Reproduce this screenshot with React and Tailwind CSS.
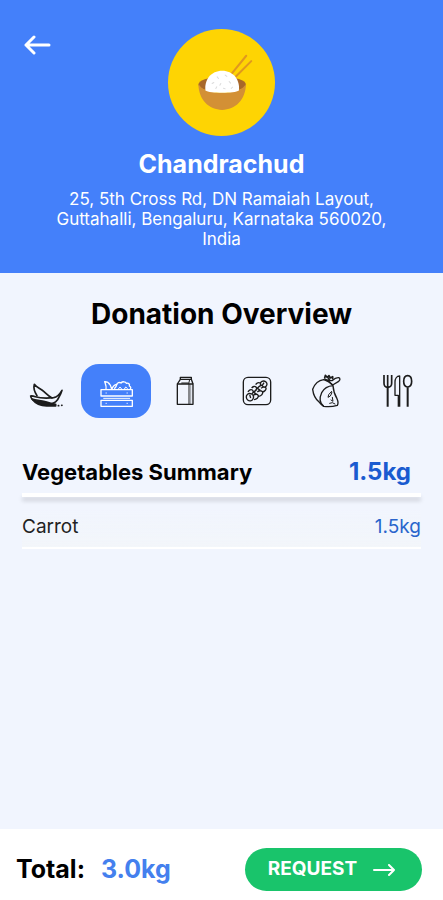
import React, { useState } from 'react';

const BananaIcon = () => (
    <svg viewBox="0 0 108 108" className="w-9 h-9" fill="none" stroke="currentColor" strokeWidth="5" strokeLinejoin="round" strokeLinecap="round" aria-hidden="true">
        <path d="M19 34c-3 10 0 22 8 34M19 34c8 11 18 12 28 21 9 8 14 14 25 20" />
        <path d="M8 69c4-1 8 0 14 2 16 5 36 5 55 3 11-2 18-10 25-22-3 12-9 20-14 29-7 9-17 13-31 12C34 91 10 85 8 69z" />
        <path d="M12 78c14 5 30 4 44 9 8 3 16 6 27 7v5H56c-18 0-34-8-44-21z" fill="currentColor" />
        <path d="M91 98h1M101 97h1" />
    </svg>
);

const CrateIcon = () => (
    <svg viewBox="0 0 108 108" className="w-9 h-9" fill="none" stroke="currentColor" strokeWidth="4" strokeLinejoin="round" strokeLinecap="round" aria-hidden="true">
        <path d="M9 50h94v19H9zM9 82h94v18H9z" />
        <path d="M17 76h78" strokeWidth="3" />
        <path d="M24 60h1M87 60h1M24 91h1M87 91h1" strokeWidth="3" />
        <path d="M24 48c2-8-2-15-4-22 11-1 18 9 21 22M24 27c3-1 7 2 10 6M42 47c3-8 8-12 14-13" />
        <path d="M50 46c3-3 5-5 6-11 2-6 8-8 13-5 4-5 14-5 16 1 7-2 11 3 9 8 5 2 5 6 3 9" />
        <path d="M62 47l4-5 4 5M80 47l3-5 5 4" strokeWidth="3" />
    </svg>
);

const MilkIcon = () => (
    <svg viewBox="0 0 108 108" className="w-9 h-9" fill="none" stroke="currentColor" strokeWidth="4" strokeLinejoin="round" aria-hidden="true">
        <path d="M37 13h33v6H37zM37 19l-9 14M70 19l5 14" />
        <path d="M28 33h47v61H28z" />
        <path d="M63 33v61M65 19l-3 14M40 30h22" strokeWidth="3" />
        <path d="M68 34v60" strokeWidth="2" opacity="0.6" />
    </svg>
);

const TrayIcon = () => (
    <svg viewBox="0 0 108 108" className="w-9 h-9" fill="none" stroke="currentColor" strokeWidth="4" strokeLinejoin="round" aria-hidden="true">
        <rect x="13" y="13" width="82" height="82" rx="14" />
        <path d="M23 67c4-6 10-7 15-4s7 9 4 15-11 7-15 4-6-9-4-15zM27 57c3-6 9-9 13-6s3 8-1 11M38 45c4-5 10-6 13-3s2 9-3 13M50 35c3-5 9-8 13-5s2 7-1 11M64 29c5-5 12-6 17-2 5 5 3 11-2 15M43 67c6-5 13-4 15 1 1 5-5 11-13 12M55 57c5-5 13-5 16 0 1 5-3 12-12 13M66 46c5-5 13-5 15-1 1 5-4 11-11 12M42 56l11 8M52 44l12 8M63 34l11 8M51 50l-7 8M62 39l-7 7M32 65l3 10M75 29l-5 8" />
    </svg>
);

const MeatIcon = () => (
    <svg viewBox="0 0 108 108" className="w-9 h-9" fill="none" stroke="currentColor" strokeWidth="4" strokeLinejoin="round" strokeLinecap="round" aria-hidden="true">
        <path d="M44 20C29 22 17 33 11 49c2 17 9 30 20 39 4 5 8 9 13 12" />
        <path d="M44 20c11 4 22 10 28 18 1 15 4 26 12 39 4 9 4 15 1 20-13 4-28 5-41 3-12-10-13-26-6-41 6-11 17-20 34-21" />
        <path d="M48 19c9 4 17 9 23 17l18-11c5-5 5-9 0-11-7-1-13 3-20 9-6 0-14-2-21-4z" />
        <path d="M47 15l2-8 6 6 5-5 4 7 7-4v6M58 15l4 8" strokeWidth="5" />
        <path d="M67 56l-8 9-2 8 7-4 4-8zM70 73l2 12-6-4M62 91l8-2 8 4" strokeWidth="3" />
    </svg>
);

const CutleryIcon = () => (
    <svg viewBox="0 0 108 108" className="w-9 h-9" fill="none" stroke="currentColor" strokeWidth="5" strokeLinejoin="round" aria-hidden="true">
        <path d="M15 6v25c0 8 5 12 11 12s12-4 12-12V6M26 6v37" />
        <path d="M26 43v58M86 43v58" strokeWidth="6" />
        <path d="M62 101V9c-9 0-14 9-14 18v40h10v34" strokeWidth="4" />
        <path d="M86 8c8 0 12 7 12 17s-5 17-12 17-12-7-12-17S78 8 86 8z" />
    </svg>
);

const RiceBowl = () => (
    <svg viewBox="0 0 320 320" className="w-full h-full" role="img" aria-label="Bowl of rice">
        <path d="M190 134l44-54M203 142l46-46" stroke="#e0981f" strokeWidth="6" strokeLinecap="round" />
        <ellipse cx="162" cy="166" rx="71" ry="23" fill="#a8682a" />
        <path d="M91 164c0 48 32 78 71 78s71-30 71-78c-8 18-35 27-71 27s-63-9-71-27z" fill="#d39035" />
        <path d="M112 184c-4-32 17-59 50-59s54 27 50 59c-12 9-88 9-100 0z" fill="#fff" />
        <path d="M147 143l4 5M171 138l5 4M132 163l5-3M158 163l-3 5M183 157l4 5M143 178l3-5M166 177l5 2M193 174l-4 4" stroke="#dcdcdc" strokeWidth="3" strokeLinecap="round" />
    </svg>
);

const categories = [
    { name: 'Fruits', Icon: BananaIcon, items: [] },
    { name: 'Vegetables', Icon: CrateIcon, items: [{ name: 'Carrot', weight: 1.5 }] },
    { name: 'Dairy', Icon: MilkIcon, items: [] },
    { name: 'Packed Food', Icon: TrayIcon, items: [] },
    { name: 'Meat', Icon: MeatIcon, items: [] },
    { name: 'Meals', Icon: CutleryIcon, items: [] },
];

const App = () => {
    const [active, setActive] = useState('Vegetables');

    const current = categories.find((category) => category.name === active);
    const weight = current.items.reduce((sum, item) => sum + item.weight, 0);

    return (
        <div className="min-h-screen flex flex-col bg-[#f1f5fe] text-black font-['Inter',sans-serif]">
            <header className="bg-[#4480fa] text-white grid grid-cols-[36px_1fr_36px] px-5 pt-[29px] pb-6">
                <button type="button" aria-label="Back" className="self-start h-8 flex items-center justify-center">
                    <svg viewBox="0 0 28 20" className="w-7 h-5" fill="none" stroke="currentColor" strokeWidth="3" strokeLinecap="round" strokeLinejoin="round" aria-hidden="true">
                        <path d="M10 2L2 10l8 8M2 10h23" />
                    </svg>
                </button>
                <div className="flex flex-col items-center text-center">
                    <div className="w-[107px] h-[107px] rounded-full bg-[#fed403]">
                        <RiceBowl />
                    </div>
                    <h1 className="text-[25px] leading-8 font-bold mt-3">Chandrachud</h1>
                    <p className="text-[17px] leading-5 mt-[9px]">
                        25, 5th Cross Rd, DN Ramaiah Layout, Guttahalli, Bengaluru, Karnataka 560020, India
                    </p>
                </div>
            </header>

            <main className="flex-1">
                <h2 className="text-[28px] leading-9 font-bold text-center pt-[23px]">Donation Overview</h2>

                <nav className="grid grid-cols-6 px-[11px] mt-8" aria-label="Categories">
                    {categories.map(({ name, Icon }) => (
                        <button
                            key={name}
                            type="button"
                            aria-label={name}
                            aria-pressed={name === active}
                            onClick={() => setActive(name)}
                            className={`h-[54px] rounded-[18px] flex items-center justify-center ${name === active ? 'bg-[#4480fa] text-white' : 'text-[#1c1c1c]'}`}
                        >
                            <Icon />
                        </button>
                    ))}
                </nav>

                <section className="px-[22px] mt-9">
                    <div className="flex items-center justify-between pr-[10px] pb-[3px]">
                        <h3 className="text-[22px] leading-9 font-bold">{current.name} Summary</h3>
                        <span className="text-2xl leading-9 font-bold text-[#1a5bd0]">{weight.toFixed(1)}kg</span>
                    </div>
                    <div className="h-1 bg-white shadow-[0_4px_4px_rgba(0,0,0,0.14)]" />
                    <table className="w-full mt-3 bg-linear-to-b from-transparent to-[#f3f6fa]">
                        <tbody>
                            {current.items.map((item) => (
                                <tr key={item.name} className="border-b-2 border-white">
                                    <th scope="row" className="pt-1 pb-1.5 text-left text-[19px] leading-7 font-normal text-[#222]">{item.name}</th>
                                    <td className="pt-1 pb-1.5 text-right text-[19px] leading-7 text-[#2a65cc]">{item.weight.toFixed(1)}kg</td>
                                </tr>
                            ))}
                        </tbody>
                    </table>
                </section>
            </main>

            <footer className="bg-white flex items-center justify-between pl-4 pr-[21px] pt-[19px] pb-[9px]">
                <p className="text-[25px] leading-[43px] font-bold">
                    Total: <span className="ml-2.5 text-[#4480ee]">3.0kg</span>
                </p>
                <button type="button" className="w-[177px] h-[43px] rounded-full bg-[#19c46b] text-white text-[19px] font-bold flex items-center justify-center gap-4 pr-1">
                    REQUEST
                    <svg viewBox="0 0 22 12" className="w-[22px] h-3" fill="none" stroke="currentColor" strokeWidth="2" strokeLinecap="round" strokeLinejoin="round" aria-hidden="true">
                        <path d="M1 6h20M16 1l5 5-5 5" />
                    </svg>
                </button>
            </footer>
        </div>
    );
};

export default App;
